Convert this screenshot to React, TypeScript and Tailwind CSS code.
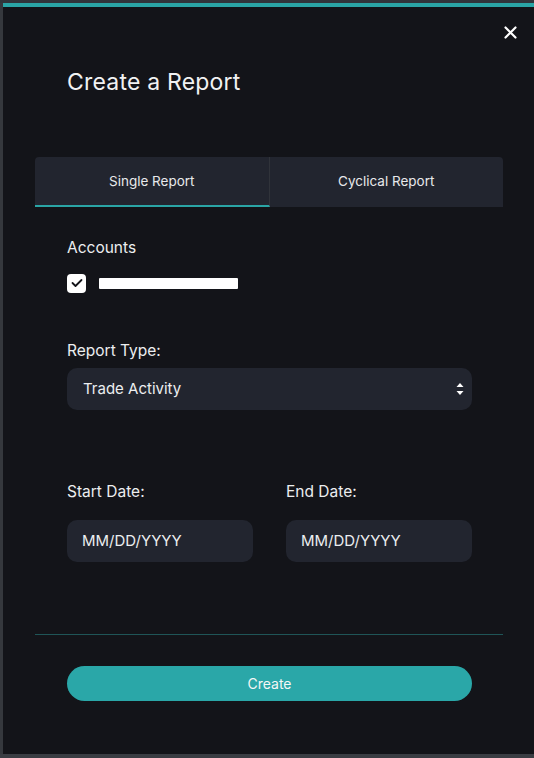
import { useState } from "react";

export default function App() {
  const [tab, setTab] = useState<"single" | "cyclical">("single");
  const [checked, setChecked] = useState(true);

  return (
    <div
      className="w-[534px] h-[758px] bg-[#3a3d43] flex flex-col overflow-hidden"
      style={{ fontFamily: "Inter, 'Open Sans', sans-serif" }}
    >
      {/* Top frame strip */}
      <div className="h-[3px] bg-[#30353b] shrink-0"></div>

      <div className="flex flex-1 min-h-0">
        {/* Left frame strip */}
        <div className="w-[3px] bg-[#35383d] shrink-0"></div>

        {/* Modal */}
        <div className="flex-1 bg-[#131419] border-t-4 border-[#2aa5a6] flex flex-col relative">
          {/* Close */}
          <button className="absolute top-[19px] right-[17px] text-white">
            <svg width="13" height="13" viewBox="0 0 13 13" fill="none">
              <path
                d="M1.5 1.5L11.5 11.5M11.5 1.5L1.5 11.5"
                stroke="white"
                strokeWidth="2.2"
                strokeLinecap="round"
              />
            </svg>
          </button>

          <h1 className="ml-[64px] mt-[60px] text-[23px] leading-[30px] text-[#f1f2f3] tracking-[0.2px]">
            Create a Report
          </h1>

          {/* Tabs */}
          <div className="mt-[60px] ml-[32px] mr-[31px] h-[50px] flex bg-[#22252f] rounded-t-[4px]">
            <button
              onClick={() => setTab("single")}
              className={`flex-1 text-[13.5px] text-[#e8e9eb] border-r border-[#30333a] border-b-2 ${
                tab === "single" ? "border-b-[#2aa5a6]" : "border-b-transparent"
              }`}
            >
              Single Report
            </button>
            <button
              onClick={() => setTab("cyclical")}
              className={`flex-1 text-[13.5px] text-[#e8e9eb] border-b-2 ${
                tab === "cyclical" ? "border-b-[#2aa5a6]" : "border-b-transparent"
              }`}
            >
              Cyclical Report
            </button>
          </div>

          {/* Form */}
          <div className="pl-[64px] pr-[62px] flex flex-col">
            <div className="mt-[30px] text-[15.5px] leading-[22px] text-[#eceef0]">
              Accounts
            </div>
            <label className="mt-[14px] flex items-center gap-[13px] h-[20px]">
              <span
                onClick={() => setChecked(!checked)}
                className="w-[19px] h-[19px] rounded-[4px] bg-white flex items-center justify-center"
              >
                {checked && (
                  <svg width="12" height="10" viewBox="0 0 12 10" fill="none">
                    <path
                      d="M1.5 5L4.5 8L10.5 2"
                      stroke="#131419"
                      strokeWidth="1.8"
                      strokeLinecap="round"
                      strokeLinejoin="round"
                    />
                  </svg>
                )}
              </span>
              <span className="w-[139px] h-[11px] bg-white rounded-[1px]"></span>
            </label>

            <div className="mt-[47px] text-[15.5px] leading-[22px] text-[#eceef0]">
              Report Type:
            </div>
            <div className="mt-[6px] h-[42px] rounded-[10px] bg-[#22252f] flex items-center justify-between pl-[16px] pr-[8px]">
              <span className="text-[15px] text-[#eceef0]">Trade Activity</span>
              <svg width="8" height="16" viewBox="0 0 8 16" fill="white">
                <path d="M4 2L7.5 6H0.5Z" />
                <path d="M4 14L7.5 10H0.5Z" />
              </svg>
            </div>

            <div className="mt-[71px] grid grid-cols-2 gap-x-[33px]">
              <div className="flex flex-col">
                <div className="text-[15.5px] leading-[22px] text-[#eceef0]">
                  Start Date:
                </div>
                <div className="mt-[17px] h-[42px] rounded-[10px] bg-[#22252f] flex items-center pl-[15px] text-[15px] text-[#eceef0]">
                  MM/DD/YYYY
                </div>
              </div>
              <div className="flex flex-col">
                <div className="text-[15.5px] leading-[22px] text-[#eceef0]">
                  End Date:
                </div>
                <div className="mt-[17px] h-[42px] rounded-[10px] bg-[#22252f] flex items-center pl-[15px] text-[15px] text-[#eceef0]">
                  MM/DD/YYYY
                </div>
              </div>
            </div>
          </div>

          <div className="mt-[72px] ml-[32px] mr-[31px] h-px bg-[#1f5557]"></div>

          <div className="pl-[64px] pr-[62px] mt-[31px]">
            <button className="w-full h-[35px] rounded-full bg-[#2aa7a8] text-[14px] text-[#f4f6f6]">
              Create
            </button>
          </div>
        </div>
      </div>

      {/* Bottom frame strip */}
      <div className="h-[4px] bg-[#3a3d43] shrink-0"></div>
    </div>
  );
}
